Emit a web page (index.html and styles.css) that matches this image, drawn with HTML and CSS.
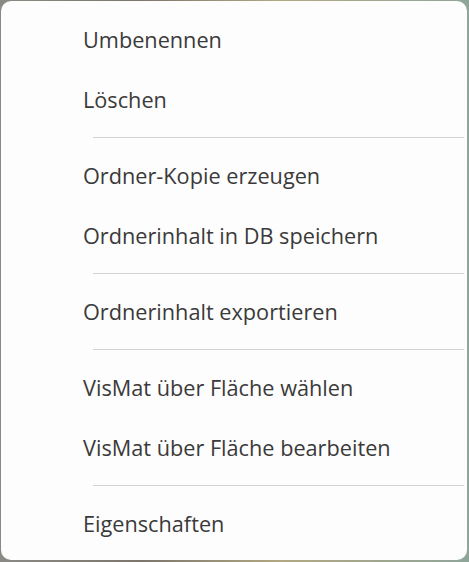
FILE: index.html
```html
<!DOCTYPE html>
<html lang="de">
<head>
<meta charset="utf-8">
<link rel="stylesheet" href="styles.css">
</head>
<body>
<div class="menu">
  <div class="item">Umbenennen</div>
  <div class="item">Löschen</div>
  <div class="sep"></div>
  <div class="item">Ordner-Kopie erzeugen</div>
  <div class="item">Ordnerinhalt in DB speichern</div>
  <div class="sep"></div>
  <div class="item">Ordnerinhalt exportieren</div>
  <div class="sep"></div>
  <div class="item">VisMat über Fläche wählen</div>
  <div class="item">VisMat über Fläche bearbeiten</div>
  <div class="sep"></div>
  <div class="item">Eigenschaften</div>
</div>
</body>
</html>
```
FILE: styles.css
```css
html, body {
  margin: 0;
  padding: 0;
  width: 469px;
  height: 562px;
  overflow: hidden;
}
body {
  background: linear-gradient(90deg, #8a8a84 0%, #7c766c 30%, #b2a882 60%, #8fa59a 100%);
  padding: 1px 2px 2px 1px;
  box-sizing: border-box;
}
.menu {
  box-sizing: border-box;
  height: 559px;
  background: #fdfdfd;
  border-radius: 10px;
  padding: 8px 0 0 0;
  font-family: "Open Sans", "Noto Sans", sans-serif;
  font-size: 21.7px;
  color: #3a3a3a;
}
.item {
  height: 60px;
  display: flex;
  align-items: center;
  padding-left: 82px;
}
.sep {
  height: 16px;
  display: flex;
  align-items: center;
  padding-left: 92px;
  padding-right: 3px;
}
.sep::after {
  content: "";
  flex: 1;
  height: 1px;
  background: #d3d3d3;
}
```
